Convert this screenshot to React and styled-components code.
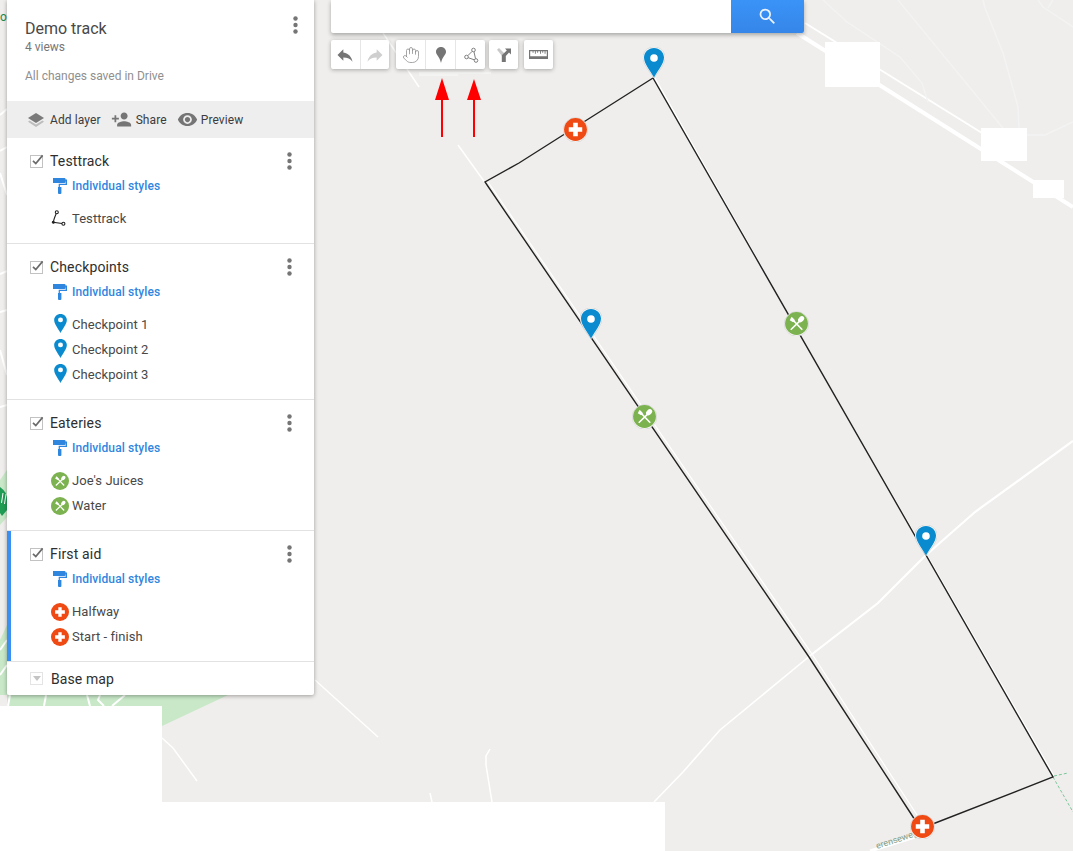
import React from 'react';
import styled, { createGlobalStyle } from 'styled-components';
import { MdPersonAdd, MdVisibility, MdSearch, MdReply } from 'react-icons/md';
import { Hand } from 'lucide-react';

const Global = createGlobalStyle`
  html, body { margin: 0; padding: 0; background: #fff; }
  body { font-family: Roboto, "Liberation Sans", sans-serif; overflow: hidden; }
`;

const Stage = styled.div`
  position: relative;
  width: 1073px;
  height: 851px;
  overflow: hidden;
  background: #efeeec;
`;

const MapArt = styled.svg`
  position: absolute;
  inset: 0;
  width: 1073px;
  height: 851px;
`;

const Panel = styled.aside`
  position: absolute;
  left: 7px;
  top: 0;
  width: 307px;
  background: #fff;
  border-radius: 0 0 2px 2px;
  box-shadow: 0 1px 4px rgba(0, 0, 0, 0.35);
`;

const Header = styled.header`
  box-sizing: border-box;
  height: 101px;
  padding: 19px 16px 0 18px;
  display: flex;
  justify-content: space-between;
`;

const Title = styled.div`
  font-size: 16px;
  line-height: 20px;
  color: #484848;
`;

const Views = styled.div`
  font-size: 12px;
  line-height: 14px;
  margin-top: 1px;
  color: #767676;
`;

const Saved = styled.div`
  font-size: 12px;
  line-height: 14px;
  margin-top: 15px;
  color: #8f8f8f;
`;

const Kebab = styled.svg`
  display: block;
  width: 5px;
  height: 18px;
  fill: #757575;
  flex: none;
  margin-top: ${p => p.$lift || 0}px;
`;

const ActionBar = styled.div`
  height: 37px;
  background: #eeeeee;
  display: flex;
  align-items: center;
  padding-left: 21px;
`;

const Action = styled.div`
  display: flex;
  align-items: center;
  gap: ${p => p.$gap}px;
  margin-right: ${p => p.$after}px;
  font-size: 12px;
  letter-spacing: 0.1px;
  color: #3c3c3c;
  svg { flex: none; color: #757575; }
`;

const Layer = styled.section`
  padding: 13px 0 12px;
  border-bottom: 1px solid #e2e2e2;
  box-shadow: ${p => (p.$active ? 'inset 4px 0 0 #3a8ff2' : 'none')};
`;

const LayerHead = styled.div`
  display: flex;
  align-items: center;
  height: 20px;
  padding: 0 22px 0 23px;
`;

const Checkbox = styled.svg`
  width: 14px;
  height: 14px;
  margin-right: 6px;
  flex: none;
`;

const LayerName = styled.div`
  flex: 1;
  font-size: 14px;
  letter-spacing: 0.15px;
  color: #2e2e2e;
`;

const StyleRow = styled.div`
  display: flex;
  align-items: center;
  gap: 3px;
  height: 20px;
  margin-top: 5px;
  padding-left: 44px;
  font-size: 12px;
  font-weight: 500;
  letter-spacing: 0.1px;
  color: #2f86df;
`;

const Items = styled.div`
  margin-top: 10px;
`;

const Item = styled.div`
  display: flex;
  align-items: center;
  gap: 3px;
  height: 25px;
  padding-left: 44px;
  font-size: 13px;
  letter-spacing: 0.05px;
  color: #484848;
`;

const IconSlot = styled.span`
  width: 18px;
  height: 18px;
  flex: none;
  display: flex;
  align-items: center;
  justify-content: center;
`;

const BaseRow = styled.div`
  height: 33px;
  display: flex;
  align-items: center;
  padding-left: 23px;
  font-size: 14px;
  letter-spacing: 0.1px;
  color: #2e2e2e;
`;

const BaseToggle = styled.span`
  box-sizing: border-box;
  width: 13px;
  height: 13px;
  margin-right: 8px;
  border: 1px solid #e4e4e4;
  display: flex;
  align-items: center;
  justify-content: center;
  &::after {
    content: '';
    border: 4px solid transparent;
    border-top: 5px solid #c4c4c4;
    border-bottom: 0;
  }
`;

const SearchBar = styled.div`
  position: absolute;
  left: 331px;
  top: 0;
  width: 473px;
  height: 33px;
  display: flex;
  background: #fff;
  border-radius: 0 0 2px 2px;
  box-shadow: 0 2px 4px rgba(0, 0, 0, 0.3);
`;

const SearchField = styled.div`
  flex: 1;
`;

const SearchButton = styled.div`
  width: 73px;
  display: flex;
  align-items: center;
  justify-content: center;
  background: linear-gradient(#3a93f7, #3686e8);
  color: #eaf2fe;
  border-radius: 0 0 2px 0;
`;

const Tools = styled.div`
  position: absolute;
  left: 331px;
  top: 40px;
  display: flex;
`;

const ToolGroup = styled.div`
  display: flex;
  width: ${p => p.$w}px;
  margin-left: ${p => p.$before || 0}px;
  background: #fff;
  border-radius: 2px;
  box-shadow: 0 1px 4px rgba(0, 0, 0, 0.3);
`;

const Tool = styled.div`
  flex: 1;
  height: 29px;
  display: flex;
  align-items: center;
  justify-content: center;
  color: ${p => (p.$off ? '#cfcfcf' : '#757575')};
  & + & { border-left: 1px solid #e6e6e6; }
`;

const Marker = styled.div`
  position: absolute;
  left: ${p => p.$x}px;
  top: ${p => p.$y}px;
  display: flex;
`;

const DotsIcon = ({ lift }) => (
  <Kebab viewBox="0 0 5 18" $lift={lift}>
    <circle cx="2.5" cy="2.5" r="2.2" />
    <circle cx="2.5" cy="9" r="2.2" />
    <circle cx="2.5" cy="15.5" r="2.2" />
  </Kebab>
);

const CheckIcon = () => (
  <Checkbox viewBox="0 0 14 14">
    <rect x="0.5" y="1.5" width="12" height="12" fill="#fff" stroke="#c2c2c2" />
    <path d="M3 6.8 5.800 9.600 12.600 1.400" fill="none" stroke="#6a6a6a" strokeWidth="1.7" />
  </Checkbox>
);

const LayersIcon = () => (
  <svg width="16" height="14" viewBox="0 0 16 14">
    <path d="M8 0 16 5 8 10 0 5z" fill="#7a7a7a" />
    <path d="M1.500 7.500 8 11.500 14.500 7.500 16 8.700 8 14 0 8.700z" fill="#bdbdbd" />
  </svg>
);

const RollerIcon = () => (
  <svg width="14" height="16" viewBox="0 0 14 16">
    <path
      fill="#2f86df"
      d="M0 0h11.500a1 1 0 0 1 1 1v.5H14V7H6.900v2H8.400v6a1 1 0 0 1-1 1H6a1 1 0 0 1-1-1V9h.7V5.800h7V2.800h-.2V4a1 1 0 0 1-1 1H0z"
    />
  </svg>
);

const PathIcon = () => (
  <svg width="18" height="18" viewBox="0 0 18 18" fill="none" stroke="#222" strokeWidth="1.100">
    <circle cx="5.800" cy="2.200" r="1.500" />
    <circle cx="12.400" cy="13.800" r="1.500" />
    <circle cx="2.300" cy="12.200" r="1" fill="#222" />
    <path d="M5.200 3.600C4 6.500 2.600 9.500 2.400 12.200L11 13.500" />
  </svg>
);

const PinIcon = () => (
  <svg width="13" height="19" viewBox="0 0 20 30" style={{ display: 'block', marginTop: '-2px' }}>
    <path d="M10 0C4.400 0 0 4.300 0 9.600 0 15.600 5.800 22.300 10 30 14.200 22.300 20 15.600 20 9.600 20 4.300 15.600 0 10 0z" fill="#0a8bd0" />
    <circle cx="10" cy="9.300" r="3.900" fill="#fff" />
  </svg>
);

const MapPinIcon = () => (
  <svg width="22" height="32" viewBox="-1 -1 22 32" style={{ display: 'block' }}>
    <path d="M10-1C3.600-1-1 3.800-1 9.600-1 15.600 5 23 10 30 15 23 21 15.600 21 9.600 21 3.800 16.400-1 10-1z" fill="#fff" stroke="#c9c9c9" strokeWidth="0.600" />
    <path d="M10 0C4.400 0 0 4.300 0 9.600 0 15.600 5.800 22.300 10 29.500 14.200 22.300 20 15.600 20 9.600 20 4.300 15.600 0 10 0z" fill="#0a8bd0" />
    <circle cx="10" cy="10" r="3.800" fill="#fff" />
  </svg>
);

const FoodIcon = ({ size = 18, halo }) => (
  <svg width={size} height={size} viewBox="0 0 26 26" style={{ display: 'block' }}>
    {halo && <circle cx="13" cy="13.400" r="12.700" fill="#fff" stroke="#c6c6c6" strokeWidth="0.600" />}
    <circle cx="13" cy="13" r={halo ? 11.900 : 13} fill="#7cb24f" />
    <path d="M7 19.500 19 8M7.500 7.500l11.500 12" stroke="#fff" strokeWidth="1.700" />
    <ellipse cx="17.800" cy="8.600" rx="2.600" ry="3.600" transform="rotate(45 17.800 8.600)" fill="#fff" />
    <path d="M6 9.500 8 6l3.500 3.600-2 2z" fill="#fff" />
  </svg>
);

const AidIcon = ({ size = 18, halo }) => (
  <svg width={size} height={size} viewBox="0 0 26 26" style={{ display: 'block' }}>
    {halo && <circle cx="13" cy="13.400" r="12.700" fill="#fff" stroke="#c6c6c6" strokeWidth="0.600" />}
    <circle cx="13" cy="13" r={halo ? 11.900 : 13} fill="#ef4a13" />
    <path d="M10.600 6h4.800v4.600H20v4.800h-4.600V20h-4.800v-4.600H6v-4.800h4.600z" fill="#fff" />
  </svg>
);

const PlaceToolIcon = () => (
  <svg width="10" height="16" viewBox="0 0 10 16">
    <path d="M5 0C2 0 0 2.200 0 4.800 0 8 3.800 10 5 16 6.200 10 10 8 10 4.800 10 2.200 8 0 5 0z" fill="#757575" />
  </svg>
);

const LineToolIcon = () => (
  <svg width="16" height="16" viewBox="0 0 16 16" fill="none" stroke="#7f7f7f" strokeWidth="1">
    <circle cx="10.500" cy="3" r="1.800" />
    <circle cx="3.500" cy="10" r="1.800" />
    <circle cx="13" cy="13.500" r="1.800" />
    <path d="M9.200 4.300 4.800 8.700M5.200 10.700l6 2.100M11 4.800l1.500 6.900" />
  </svg>
);

const MergeToolIcon = () => (
  <svg width="14" height="14" viewBox="0 0 14 14">
    <path d="M0 1.800 2 0 7.500 5.500V8H5z" fill="#c9c9c9" />
    <path d="M4.800 14V7.200L9.800 2.500 8 .5h6v6l-2-1.900-3.200 3.300V14z" fill="#757575" />
  </svg>
);

const RulerIcon = () => (
  <svg width="19" height="9" viewBox="0 0 19 9">
    <path fill="#757575" fillRule="evenodd" d="M0 0h19v9H0zM1.200 1.200v5h16.600v-5h-1.300v2.500h-.9V1.200h-1.400v1.500h-.9V1.200h-1.400v2.500h-.9V1.200H9.100v1.500h-.9V1.200H6.800v2.500h-.9V1.200H4.500v1.500h-.9V1.200z" />
  </svg>
);

const RoadLine = styled.polyline`
  fill: none;
  stroke: ${p => p.$c || '#fff'};
  stroke-width: ${p => p.$w || 1.5}px;
`;

const MapDrawing = () => (
  <MapArt viewBox="0 0 1073 851">
    <path d="M0 480 7 470V517L0 525zM7 625 0 640V706H7zM0 695H228L162 726V706H0z" fill="#c8e8c8" />
    <path d="M0 487Q7 492 7 499V510L2 516 0 513z" fill="#1f9d55" />
    <path d="M3 493 1.500 503M6 494 4.500 504" stroke="#fff" strokeWidth="1" />
    <text x="0" y="21" fontFamily="Roboto" fontSize="12" fill="#1a8a4a">o</text>
    {[
      '0,115 7,109', '0,151 7,147', '0,173 7,195', '0,274 7,271', '0,312 7,310',
      '0,350 7,375', '0,407 7,405', '0,650 7,640', '0,675 7,665', '10,695 8,706',
      '46,695 44,706', '87,695 90,706', '100,695 98,700 104,706', '125,695 112,706',
    ].map(points => <RoadLine key={points} points={points} $w={2} />)}
    <RoadLine points="383,33 419,87" />
    <RoadLine points="458,145 486,184" />
    <RoadLine points="488,182 812,654 917,815" $w={1.2} />
    <RoadLine points="655,78 797,330 1054,776" $w={1.500} />
    <RoadLine points="1073,441 975,512 925,556 878,603 811,655" $w={2.200} />
    <RoadLine points="811,655 720,730 683,772 654,802" $w={1.600} />
    <RoadLine points="315,680 378,737" />
    <RoadLine points="162,738 173,748 197,781" />
    <RoadLine points="490,749 486,756 486,765 492,802" />
    <RoadLine points="430,793 432,802" />
    <RoadLine points="797,33 1073,207" $w={4} />
    <RoadLine points="805,23 982,133" $w={2} />
    <RoadLine points="823,0 847,22 900,57 922,83 928,102" $c="#f3f3f3" />
    <RoadLine points="898,0 980,100 1003,128" $c="#f3f3f3" />
    <RoadLine points="983,0 985,8 1003,53 1018,107 1019,128" $c="#f3f3f3" />
    <RoadLine points="1027,135 1045,135 1073,122" $c="#f3f3f3" />
    <RoadLine points="1038,0 1043,7 1073,27" $c="#f3f3f3" />
    <RoadLine points="1053,0 1048,8" $c="#f3f3f3" />
    <RoadLine points="1053,777 1073,812" $c="#7cc79a" $w={1} strokeDasharray="3 2" />
    <RoadLine points="1054,776 1068,773" $c="#7cc79a" $w={1} strokeDasharray="3 2" />
    <RoadLine points="870,851 915,837" $c="#fff" $w={3} />
    <text x="877" y="849" fontFamily="Roboto" fontSize="9" fill="#7fa08a" transform="rotate(-18 877 849)">erenseweg</text>
    <path d="M419 72H491V74H458V76H419z" fill="#f4f4f3" />
    <path d="M825 42H880V87H825zM981 128H1027V161H981zM1033 180H1064V198H1033zM0 706H162V802H665V851H0z" fill="#fff" />
    <RoadLine points="653,78 519,163 485,182 809,657 915,820" $c="#222" $w={1.400} />
    <RoadLine points="653,78 1053,777 925,827" $c="#222" $w={1.400} />
    <path d="M442 137V100M474 137V100" stroke="#f00" strokeWidth="2" />
    <path d="M435 100 442 78 449 100zM467 100 474 79 481 100z" fill="#f00" />
  </MapArt>
);

const layers = [
  { name: 'Testtrack', items: [['Testtrack', PathIcon]] },
  { name: 'Checkpoints', items: [['Checkpoint 1', PinIcon], ['Checkpoint 2', PinIcon], ['Checkpoint 3', PinIcon]] },
  { name: 'Eateries', items: [["Joe's Juices", FoodIcon], ['Water', FoodIcon]] },
  { name: 'First aid', active: true, items: [['Halfway', AidIcon], ['Start - finish', AidIcon]] },
];

const markers = [
  { x: 643, y: 47, El: <MapPinIcon /> },
  { x: 580, y: 308, El: <MapPinIcon /> },
  { x: 915, y: 525, El: <MapPinIcon /> },
  { x: 563, y: 117, El: <AidIcon halo size={25} /> },
  { x: 910, y: 814, El: <AidIcon halo size={25} /> },
  { x: 784, y: 311, El: <FoodIcon halo size={25} /> },
  { x: 632, y: 404, El: <FoodIcon halo size={25} /> },
];

export default function App() {
  return (
    <Stage>
      <Global />
      <MapDrawing />
      {markers.map(m => (
        <Marker key={`${m.x}-${m.y}`} $x={m.x} $y={m.y}>{m.El}</Marker>
      ))}
      <SearchBar>
        <SearchField />
        <SearchButton><MdSearch size={21} /></SearchButton>
      </SearchBar>
      <Tools>
        <ToolGroup $w={58}>
          <Tool><MdReply size={20} /></Tool>
          <Tool $off><MdReply size={20} style={{ transform: 'scaleX(-1)' }} /></Tool>
        </ToolGroup>
        <ToolGroup $w={89} $before={7}>
          <Tool><Hand size={18} strokeWidth={1} color="#8a8a8a" /></Tool>
          <Tool><PlaceToolIcon /></Tool>
          <Tool><LineToolIcon /></Tool>
        </ToolGroup>
        <ToolGroup $w={29} $before={4}>
          <Tool><MergeToolIcon /></Tool>
        </ToolGroup>
        <ToolGroup $w={29} $before={6}>
          <Tool><RulerIcon /></Tool>
        </ToolGroup>
      </Tools>
      <Panel>
        <Header>
          <div>
            <Title>Demo track</Title>
            <Views>4 views</Views>
            <Saved>All changes saved in Drive</Saved>
          </div>
          <DotsIcon lift={-3} />
        </Header>
        <ActionBar>
          <Action $gap={6} $after={10}><LayersIcon />Add layer</Action>
          <Action $gap={4} $after={10}><MdPersonAdd size={21} />Share</Action>
          <Action $gap={3} $after={0}><MdVisibility size={21} />Preview</Action>
        </ActionBar>
        {layers.map(layer => (
          <Layer key={layer.name} $active={layer.active}>
            <LayerHead>
              <CheckIcon />
              <LayerName>{layer.name}</LayerName>
              <DotsIcon />
            </LayerHead>
            <StyleRow>
              <IconSlot><RollerIcon /></IconSlot>
              Individual styles
            </StyleRow>
            <Items>
              {layer.items.map(([label, Icon]) => (
                <Item key={label}>
                  <IconSlot><Icon /></IconSlot>
                  {label}
                </Item>
              ))}
            </Items>
          </Layer>
        ))}
        <BaseRow>
          <BaseToggle />
          Base map
        </BaseRow>
      </Panel>
    </Stage>
  );
}
